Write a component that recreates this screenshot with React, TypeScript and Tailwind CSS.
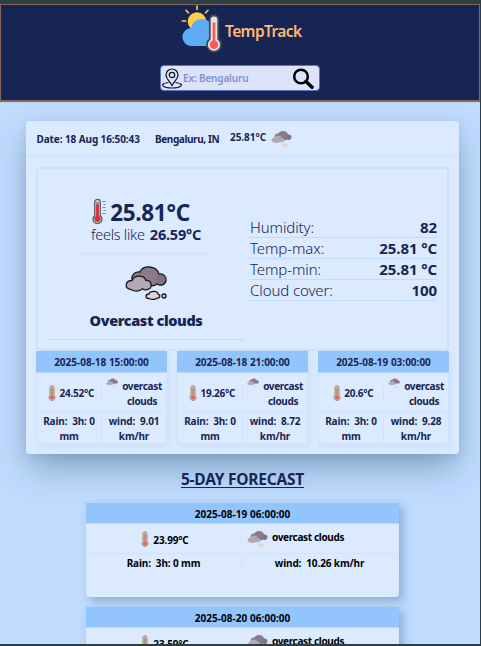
type Slot = { time: string; temp: string; wind: string };

const hours: Slot[] = [
  { time: '2025-08-18 15:00:00', temp: '24.52°C', wind: '9.01' },
  { time: '2025-08-18 21:00:00', temp: '19.26°C', wind: '8.72' },
  { time: '2025-08-19 03:00:00', temp: '20.6°C', wind: '9.28' },
];

const days: Slot[] = [
  { time: '2025-08-19 06:00:00', temp: '23.99°C', wind: '10.26' },
  { time: '2025-08-20 06:00:00', temp: '23.59°C', wind: '' },
];

const details = [
  ['Humidity:', '82'],
  ['Temp-max:', '25.81 °C'],
  ['Temp-min:', '25.81 °C'],
  ['Cloud cover:', '100'],
];

function Logo() {
  return (
    <svg className="h-[49px] w-[42px] shrink-0" viewBox="0 0 42 49">
      <path d="M16 1v3.500M5 5.300l2.500 2.700M27 5.300L24.500 8M1.300 16h3.500" stroke="#ffcd4c" strokeWidth="1.600" strokeLinecap="round" />
      <circle cx="16" cy="16.500" r="9.300" fill="#ffcd4c" />
      <path d="M10.500 41a9 9 0 0 1-.2-18C11 17 16 14 21 14s9.500 3 10 9v18z" fill="#60abf6" />
      <path d="M33 10.500a4.200 4.200 0 0 1 4.200 4.200V34a7 7 0 1 1-8.400 0V14.700A4.200 4.200 0 0 1 33 10.500z" fill="#e4e4e6" stroke="#454a55" strokeWidth="1.800" />
      <path d="M33 17.500v20" stroke="#ff5757" strokeWidth="2.800" />
      <circle cx="33" cy="39.700" r="4.300" fill="#ff5757" />
    </svg>
  );
}

function Cloud({ className, outline = false }: { className: string; outline?: boolean }) {
  const line = outline ? '#17151b' : 'none';
  return (
    <svg className={className} viewBox="0 0 42 34">
      <g stroke={line} strokeWidth="1.300">
        <path d="M8 15C5 11 9 5 15 6c3-7 16-7 19 2 4-.5 7 2 7 5.500 0 5-5 7-9 4.500-3 2.500-7 2.500-9 0z" fill="#897c88" />
        <path d="M29 2.500c4 3 4 10 1 15 4-1 5 1 7 0 6-3 4-10-3-9-.5-3-3-5-5-6z" fill="#776b77" stroke="none" opacity=".45" />
        <path d="M6 23.500c-7-1-6-9 1-9 2-5.500 12-6 14 0 6-.5 7 8 1.500 9-3 1-4 0-5-.7-4 3-8 3-11.500.7z" fill="#b3a9b4" />
        <path d="M24 32.500c-4 0-4-4.500 0-4.500 1-3.500 9-3.500 9 .2 3 .8 2 4-1 4-2 1.500-5 1.500-8 .3z" fill="#e2d6d9" />
        <circle cx="39" cy="30" r="2" fill="#e2d6d9" />
      </g>
    </svg>
  );
}

function Thermometer({ className }: { className: string }) {
  return (
    <svg className={className} viewBox="0 0 8 16">
      <path d="M2 2.500Q2 .7 4 .7t2 1.800v7.700a3 3 0 1 1-4 0z" fill="#d6c2a5" stroke="#9c9186" strokeWidth="1" />
      <path d="M4 2.500v10" stroke="#9d7772" strokeWidth="1.200" />
      <path d="M1 4h1M1 6h1M1 8h1M6 4h1M6 6h1M6 8h1" stroke="#e2a53c" strokeWidth="1" />
      <circle cx="4" cy="12.500" r="2" fill="#e5645c" />
    </svg>
  );
}

function ScaleThermometer() {
  return (
    <svg className="h-[27px] w-[15px] shrink-0" viewBox="0 0 15 27">
      <path d="M2.700 4a2.800 2.800 0 0 1 5.600 0v13.500a4.500 4.500 0 1 1-5.600 0z" fill="#bfc9cb" stroke="#4d5559" strokeWidth="1.100" />
      <path d="M5.500 4v4" stroke="#718087" strokeWidth="2" />
      <path d="M5.500 6.500v13" stroke="#e32a3c" strokeWidth="2.800" />
      <circle cx="5.500" cy="20.800" r="3.100" fill="#e32a3c" />
      <path d="M10.500 3.500h3M11.500 6.500h2M10.500 9.500h3M11.500 12.500h2M10.500 15.500h3" stroke="#7d898e" />
    </svg>
  );
}

function HourCard({ slot }: { slot: Slot }) {
  return (
    <article className="h-[93px] w-[131px] rounded-b border border-t-0 border-[#cee3ff] text-center shadow-[2px_3px_6px_#3b82b018]">
      <h3 className="-mx-px h-[22px] border-b border-[#b5d7ff] bg-[#93c5fd] pt-px text-[10px] leading-[21px] font-bold">{slot.time}</h3>
      <div className="flex h-[40px] items-center border-b border-[#cfe3ff]">
        <div className="flex h-[15px] w-[65px] items-center justify-center gap-[3px] border-r border-[#cfe3ff] pl-[5px]">
          <Thermometer className="h-4 w-2 shrink-0" />
          <span className="pt-0.5 tracking-[-.25px]">{slot.temp}</span>
        </div>
        <div className="flex h-[30px] w-[65px] pl-[4px]">
          <Cloud className="h-[10px] w-3 shrink-0" />
          <span className="ml-[2px] w-[45px] pt-px tracking-[-.35px]">overcast clouds</span>
        </div>
      </div>
      <div className="flex h-[30px] tracking-[-.15px]">
        <div className="h-full w-[65px] border-r border-[#cfe3ff] pt-px leading-[15px]">Rain:&nbsp; 3h: 0<br />mm</div>
        <div className="w-[64px] pt-px leading-[15px]">wind:&nbsp; {slot.wind}<br />km/hr</div>
      </div>
    </article>
  );
}

function DayCard({ slot }: { slot: Slot }) {
  return (
    <article className="h-[94px] w-[313px] shrink-0 rounded-b bg-[#dbeafe] text-center text-[10px] leading-[15px] font-bold text-black shadow-[4px_4px_10px_#345c8560]">
      <h3 className="h-[21px] border-b border-[#b5d7ff] bg-[#93c5fd] leading-[22px] tracking-[.05px]">{slot.time}</h3>
      <div className="flex h-[30px] items-center border-b border-[#cfe3ff]">
        <div className="flex h-[15px] w-[156px] items-center justify-center gap-[4px] border-r border-[#cfe3ff] pl-[3px]">
          <Thermometer className="h-4 w-2" />
          <span className="pt-[3px] tracking-[-.15px]">{slot.temp}</span>
        </div>
        <div className="flex items-start gap-[4px] pl-[5px]">
          <Cloud className="h-[18px] w-[21px]" />
          <span className="tracking-[-.35px]">overcast clouds</span>
        </div>
      </div>
      {slot.wind && (
        <div className="flex pt-0.5 tracking-[-.12px]">
          <div className="w-[156px] border-r border-[#cfe3ff]">Rain:&nbsp; 3h: 0 mm</div>
          <div className="w-[156px] border-r border-[#cfe3ff]">wind:&nbsp; {slot.wind} km/hr</div>
        </div>
      )}
    </article>
  );
}

export default function App() {
  return (
    <div className="h-[646px] w-[481px] overflow-hidden border-t-4 border-r border-b-2 border-[#2d3e44] bg-[#bfdbfe] font-['Noto_Sans','Open_Sans',sans-serif] text-[#172554]">
      <header className="h-[98px] border border-b-2 border-[#84665e] bg-[#172554]">
        <div className="flex h-[49px] pl-[180px]">
          <Logo />
          <h1 className="ml-[2px] pt-[14px] text-[15.500px] leading-[24px] font-semibold tracking-[-.6px] text-[#fdba74]">TempTrack</h1>
        </div>
        <div className="mt-[11px] ml-[159px] flex h-[26px] w-[160px] items-center rounded-sm border border-[#5975bd] bg-[#dce3fa]">
          <svg className="ml-[1px] h-[21px] w-5 shrink-0" viewBox="0 0 20 21" fill="none" stroke="#111722" strokeWidth="1.200">
            <path d="M10 17.500C7.500 13 4 10.500 4 7a6 6 0 0 1 12 0c0 3.500-3.500 6-6 10.500z" />
            <circle cx="10" cy="7" r="2.700" />
            <path d="M6.500 14.500C-4 16 1 20 10 20s14-4 3.500-5.500" />
          </svg>
          <span className="ml-px text-[10px] font-semibold tracking-[-.15px] text-[#7f91ca]">Ex: Bengaluru</span>
          <svg className="mr-[5px] ml-auto h-[21px] w-[22px]" viewBox="0 0 22 21" fill="none" stroke="#000">
            <circle cx="9" cy="8.500" r="6.800" strokeWidth="2.500" />
            <path d="M14 13.500l6 5.700" strokeWidth="3.500" strokeLinecap="round" />
          </svg>
        </div>
      </header>

      <main>
        <section className="mt-[19px] ml-[26px] h-[333px] w-[433px] rounded bg-[#dbeafe] text-[10px] leading-[15px] font-bold shadow-[0_16px_32px_-4px_#31547175,0_2px_8px_#3b6e9e25]">
          <div className="flex h-[36px] items-start border-b border-[#cce1ff] pt-[11px] pl-[10.500px]">
            <span className="w-[118.500px] tracking-[-.1px]">Date: 18 Aug 16:50:43</span>
            <span className="w-[75px] tracking-[-.4px]">Bengaluru, IN</span>
            <span className="-mt-0.5 w-[41px] tracking-[-.05px]">25.81°C</span>
            <Cloud className="-mt-[2px] h-[18px] w-[21px]" />
          </div>

          <div className="mt-[10px] ml-[10px] flex h-[184px] w-[413px] rounded border-2 border-[#cce1ff]">
            <div className="ml-[9px] flex h-[171px] w-[198px] flex-col items-center border-b border-[#bfdbfe] pt-[29px]">
              <div className="mr-[10px] flex h-[29px] gap-[3px]">
                <ScaleThermometer />
                <span className="mt-[4px] text-[22.500px] leading-[22px] tracking-[-.3px]">25.81°C</span>
              </div>
              <div className="flex h-[27px] w-[132px] justify-center gap-[5px] border-b border-[#cce1ff] text-[14.500px] leading-[15px]">
                <span className="font-light tracking-[-.25px]">feels like</span>
                <b className="font-bold tracking-[-.2px]">26.59°C</b>
              </div>
              <Cloud outline className="mt-[12px] h-[34px] w-[42px] shrink-0" />
              <b className="mt-[9px] text-[14.500px] leading-[22px] tracking-[-.4px] whitespace-nowrap">Overcast clouds</b>
            </div>
            <dl className="mt-[48px] ml-[5px] w-[187px] text-[15px] leading-[20px]">
              {details.map(([label, value]) => (
                <div key={label} className="flex h-[21px] justify-between border-b border-[#bfdbfe]">
                  <dt className="font-light tracking-[-.1px]">{label}</dt>
                  <dd className="tracking-[-.1px]">{value}</dd>
                </div>
              ))}
            </dl>
          </div>

          <div className="flex gap-[10px] pl-[10px]">
            {hours.map((slot) => <HourCard key={slot.time} slot={slot} />)}
          </div>
        </section>

        <h2 className="mt-[15px] pl-[5px] text-center text-[15.500px] leading-[20px] font-bold tracking-[-.22px] underline underline-offset-2">5-DAY FORECAST</h2>
        <div className="mt-[14px] ml-[86px] flex flex-col gap-[10px]">
          {days.map((slot) => <DayCard key={slot.time} slot={slot} />)}
        </div>
      </main>
    </div>
  );
}
